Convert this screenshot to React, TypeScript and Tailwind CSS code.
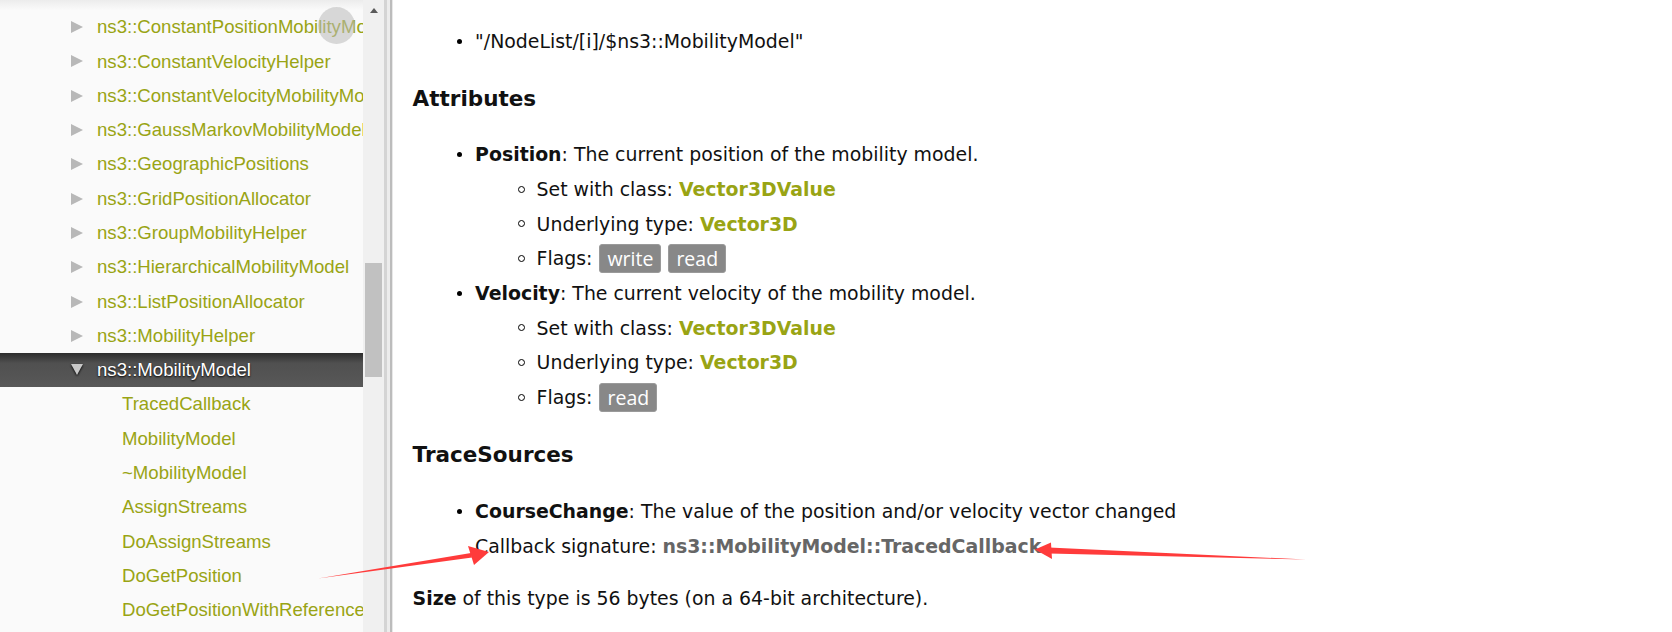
import React from "react";

const navItems: { label: string; kind: "parent" | "open" | "child" }[] = [
  { label: "ns3::ConstantPositionMobilityModel", kind: "parent" },
  { label: "ns3::ConstantVelocityHelper", kind: "parent" },
  { label: "ns3::ConstantVelocityMobilityModel", kind: "parent" },
  { label: "ns3::GaussMarkovMobilityModel", kind: "parent" },
  { label: "ns3::GeographicPositions", kind: "parent" },
  { label: "ns3::GridPositionAllocator", kind: "parent" },
  { label: "ns3::GroupMobilityHelper", kind: "parent" },
  { label: "ns3::HierarchicalMobilityModel", kind: "parent" },
  { label: "ns3::ListPositionAllocator", kind: "parent" },
  { label: "ns3::MobilityHelper", kind: "parent" },
  { label: "ns3::MobilityModel", kind: "open" },
  { label: "TracedCallback", kind: "child" },
  { label: "MobilityModel", kind: "child" },
  { label: "~MobilityModel", kind: "child" },
  { label: "AssignStreams", kind: "child" },
  { label: "DoAssignStreams", kind: "child" },
  { label: "DoGetPosition", kind: "child" },
  { label: "DoGetPositionWithReference", kind: "child" },
];

const NavRow = ({ label, kind }: { label: string; kind: string }) => {
  if (kind === "open") {
    return (
      <div className="h-[34.3px] flex items-center pl-[71px] whitespace-nowrap bg-[linear-gradient(to_bottom,#2c2c2c,#505050_30%,#585858)]">
        <svg width="12" height="12" viewBox="0 0 12 12" className="shrink-0 drop-shadow-[0_1px_1px_#000]">
          <polygon points="0,0 12,0 6,11" fill="#c8c8c8" />
        </svg>
        <span className="ml-[14px] text-white [text-shadow:0_1px_2px_#000]">{label}</span>
      </div>
    );
  }
  if (kind === "child") {
    return (
      <div className="h-[34.3px] flex items-center pl-[122px] whitespace-nowrap text-[#99a414]">
        {label}
      </div>
    );
  }
  return (
    <div className="h-[34.3px] flex items-center pl-[71px] whitespace-nowrap">
      <svg width="12" height="12" viewBox="0 0 12 12" className="shrink-0">
        <polygon points="0,0 12,6 0,12" fill="#b8b8b8" />
      </svg>
      <span className="ml-[14px] text-[#99a414]">{label}</span>
    </div>
  );
};

const Disc = () => (
  <span className="w-[5px] h-[5px] rounded-full bg-black shrink-0" />
);
const Circle = () => (
  <span className="w-[7px] h-[7px] rounded-full border border-black shrink-0" />
);

const Item = ({ children }: { children: React.ReactNode }) => (
  <div className="h-[34.7px] flex items-center pl-[44px] whitespace-nowrap">
    <Disc />
    <span className="ml-[13.5px]">{children}</span>
  </div>
);

const SubItem = ({ children }: { children: React.ReactNode }) => (
  <div className="h-[34.7px] flex items-center pl-[105px] whitespace-nowrap">
    <Circle />
    <span className="ml-[12px] flex items-center">{children}</span>
  </div>
);

const Badge = ({ text }: { text: string }) => (
  <span className="inline-flex items-center h-[29px] px-[7px] ml-[7px] rounded-[3px] bg-[#888888] border border-[#9a9a9a] text-white text-[19.5px] font-['Open_Sans',sans-serif]">
    {text}
  </span>
);

const Link = ({ children }: { children: React.ReactNode }) => (
  <b className="text-[#99a414]">{children}</b>
);

export default function App() {
  return (
    <div className="relative w-[1672px] h-[632px] overflow-hidden flex bg-white">
      {/* navigation tree */}
      <div className="relative w-[363px] shrink-0 bg-[#fafafa] overflow-hidden font-['Liberation_Sans',Arial,sans-serif] text-[18.6px]">
        <div className="h-[10px] bg-[linear-gradient(to_bottom,#ececec,#fafafa)]" />
        {navItems.map((it) => (
          <NavRow key={it.label} label={it.label} kind={it.kind} />
        ))}
        <div className="absolute left-[318px] top-[7px] w-[37px] h-[37px] rounded-full bg-[rgba(185,185,185,0.55)]" />
      </div>

      {/* scrollbar */}
      <div className="w-[21px] shrink-0 bg-[#f0f0f0] flex flex-col items-center">
        <svg width="8" height="6" viewBox="0 0 8 6" className="mt-[8px] ml-[1px]">
          <polygon points="0,5 4,0 8,5" fill="#5a5a5a" />
        </svg>
        <div className="mt-[249px] w-[17px] h-[114px] bg-[#c1c1c1]" />
      </div>

      {/* splitter */}
      <div className="w-[9px] shrink-0 flex">
        <div className="w-[2.5px] bg-[#d4d4d4]" />
        <div className="w-[3px] bg-[#ececec]" />
        <div className="w-[2.5px] bg-[#bcbcbc]" />
        <div className="w-[1px] bg-[#e8e8e8]" />
      </div>

      {/* content */}
      <div className="flex-1 pl-[19.6px] pt-[24px] font-['DejaVu_Sans',Verdana,sans-serif] text-[18.9px] text-[#111]">
        <Item>"/NodeList/[i]/$ns3::MobilityModel"</Item>

        <h2 className="mt-[25.3px] h-[30px] leading-[30px] text-[21.5px] font-bold">Attributes</h2>

        <div className="mt-[23.15px]">
          <Item>
            <b>Position</b>: The current position of the mobility model.
          </Item>
          <SubItem>
            Set with class:&nbsp;<Link>Vector3DValue</Link>
          </SubItem>
          <SubItem>
            Underlying type:&nbsp;<Link>Vector3D</Link>
          </SubItem>
          <SubItem>
            Flags:<Badge text="write" />
            <Badge text="read" />
          </SubItem>
          <Item>
            <b>Velocity</b>: The current velocity of the mobility model.
          </Item>
          <SubItem>
            Set with class:&nbsp;<Link>Vector3DValue</Link>
          </SubItem>
          <SubItem>
            Underlying type:&nbsp;<Link>Vector3D</Link>
          </SubItem>
          <SubItem>
            Flags:<Badge text="read" />
          </SubItem>
        </div>

        <h2 className="mt-[25.25px] h-[30px] leading-[30px] text-[21.5px] font-bold">TraceSources</h2>

        <div className="mt-[24.35px]">
          <Item>
            <b>CourseChange</b>: The value of the position and/or velocity vector changed
          </Item>
          <div className="h-[34.7px] flex items-center pl-[62.4px] whitespace-nowrap">
            Callback signature:&nbsp;<b className="text-[#666666]">ns3::MobilityModel::TracedCallback</b>
          </div>
        </div>

        <p className="mt-[17.9px] h-[34.7px] leading-[34.7px] whitespace-nowrap">
          <b>Size</b> of this type is 56 bytes (on a 64-bit architecture).
        </p>
      </div>

      {/* red annotation arrows */}
      <svg className="absolute inset-0 pointer-events-none" width="1672" height="632" viewBox="0 0 1672 632">
        <polygon points="318,578.5 471,553 472,557.5" fill="#ff3b3b" />
        <polygon points="489,552 468,546 474,565" fill="#ff3b3b" />
        <polygon points="1306,559.5 1049,547.5 1049,553.5" fill="#ff3b3b" />
        <polygon points="1035,549.5 1051,542.5 1052,559" fill="#ff3b3b" />
      </svg>
    </div>
  );
}
